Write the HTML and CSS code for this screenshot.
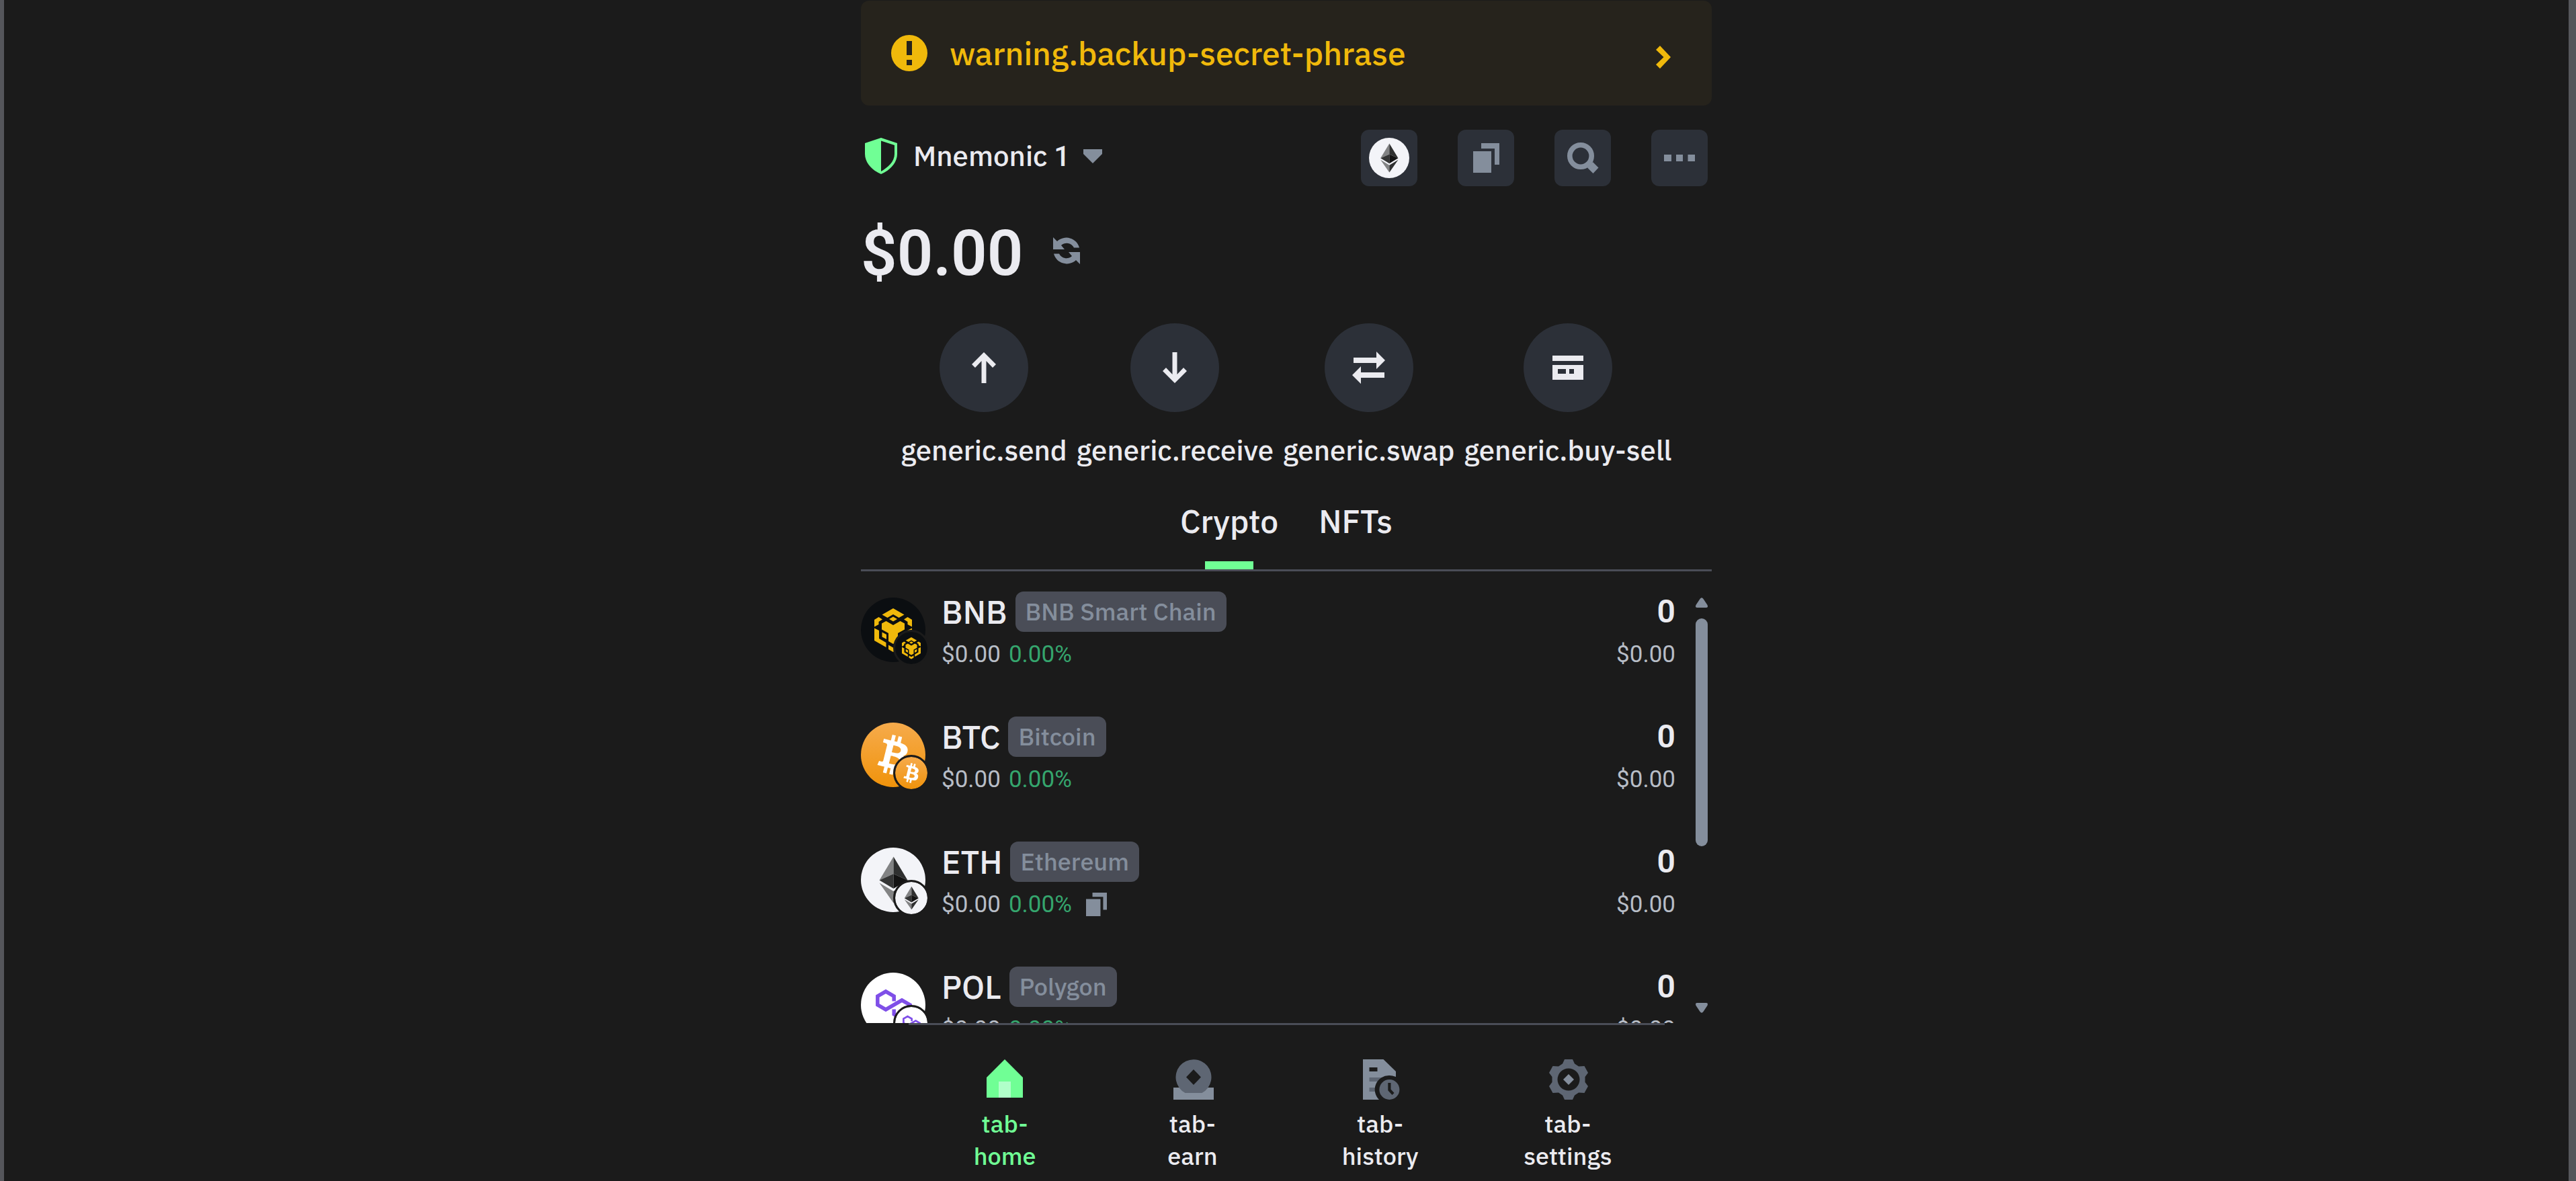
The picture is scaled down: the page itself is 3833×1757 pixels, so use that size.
FILE: index.html
```html
<!DOCTYPE html>
<html lang="en">
<head>
<meta charset="utf-8">
<meta name="viewport" content="width=device-width, initial-scale=1">
<title>Wallet</title>
<link rel="stylesheet" href="styles.css">
</head>
<body>
<svg class="sprite" aria-hidden="true">
  <defs>
    <linearGradient id="btc-fill" x1="0" y1="0" x2="0" y2="1">
      <stop offset="0" stop-color="#f6ab4c"/>
      <stop offset="1" stop-color="#f0930b"/>
    </linearGradient>
  </defs>
  <symbol id="bnb" viewBox="0 0 96 96">
    <circle cx="48" cy="48" r="48" fill="#0b0e11"/>
    <g fill="#f0b90b">
      <path d="M48 16L64.5 25.5L56.5 30L48 25L39.5 30L31.5 25.5Z"/>
      <path d="M48 28.5L54 32L48 35.5L42 32Z"/>
      <path d="M20 33L26.5 29L32 32.5L26.500 36V40L20 43.500Z"/>
      <path d="M76 33L69.5 29L64 32.5L69.500 36V40L76 43.500Z"/>
      <path d="M31 38.500L37.500 35L48 41L58.500 35L65 38.500V47.500L55 53V65L48 69L41 65V53L31 47.500Z"/>
      <path d="M20 45.500L27 49V61L37.500 67V74L20 64Z"/>
      <path d="M76 45.500L69 49V61L58.500 67V74L76 64Z"/>
      <path d="M31.500 51.500L38 55V62L31.500 58.500Z"/>
      <path d="M64.500 51.500L58 55V62L64.500 58.500Z"/>
      <path d="M41 70.500L48 74.500L55 70.500V77L48 81L41 77Z"/>
    </g>
  </symbol>
  <symbol id="btc" viewBox="0 0 32 32">
    <circle cx="16" cy="16" r="16" fill="url(#btc-fill)"/>
    <path fill="#fff" d="M23.189 14.02c.314-2.096-1.283-3.223-3.465-3.975l.708-2.84-1.728-.43-.69 2.765c-.454-.114-.92-.22-1.385-.326l.695-2.783L15.596 6l-.708 2.839c-.376-.086-.746-.17-1.104-.26l.002-.009-2.384-.595-.46 1.846s1.283.294 1.256.312c.7.175.826.638.805 1.006l-.806 3.235c.048.012.11.03.18.057l-.183-.045-1.13 4.532c-.086.212-.303.531-.793.41.018.025-1.256-.313-1.256-.313l-.858 1.978 2.25.561c.418.105.828.215 1.231.318l-.715 2.872 1.727.43.708-2.84c.472.127.93.245 1.378.357l-.706 2.828 1.728.43.715-2.866c2.948.558 5.164.333 6.097-2.333.752-2.146-.037-3.385-1.588-4.192 1.13-.26 1.98-1.003 2.207-2.538zm-3.95 5.538c-.533 2.147-4.148.986-5.32.695l.95-3.805c1.172.293 4.929.872 4.37 3.11zm.535-5.569c-.487 1.953-3.495.96-4.47.717l.86-3.45c.975.243 4.118.696 3.61 2.733z"/>
  </symbol>
  <symbol id="eth" viewBox="0 0 96 96">
    <circle cx="48" cy="48" r="48" fill="#f3f4f8"/>
    <path fill="#828384" d="M48.500 13.500L27.500 48.500L48.500 39ZM27.500 52.500L48.500 65V82.500Z"/>
    <path fill="#2f3030" d="M48.500 13.500L69.500 48.500L48.500 39ZM69.500 52.500L48.500 65V82.500Z"/>
    <path fill="#343535" d="M27.500 48.500L48.500 39V61Z"/>
    <path fill="#131313" d="M69.500 48.500L48.500 39V61Z"/>
  </symbol>
  <symbol id="pol" viewBox="0 0 96 96">
    <circle cx="48" cy="48" r="48" fill="#fff"/>
    <path fill="none" stroke="#7f4fe8" stroke-width="5.500" d="M49.200 42.500V35L37 28L24.800 35V48L37 55L61 41L73.200 48V62L61 69L49.200 62V54.500"/>
  </symbol>
  <symbol id="copy" viewBox="22 21 39 44">
    <path fill="#848e9c" d="M34 21H61V53H54V29H34ZM22 33H49V65H22Z"/>
  </symbol>
</svg>

<div class="app">
  <button class="banner" type="button">
    <svg class="icon" viewBox="0 0 72 72" aria-hidden="true"><path fill="#f0b90b" fill-rule="evenodd" d="M36 9a27 27 0 1 0 0 54a27 27 0 1 0 0-54ZM32 18H40V39H32ZM32 46H40V54H32Z"/></svg>
    <span class="banner-text">warning.backup-secret-phrase</span>
    <svg class="icon" viewBox="0 0 72 72" aria-hidden="true"><path fill="#f0b90b" d="M31 25L47 42L31 59L25 53L36.500 42L25 31Z"/></svg>
  </button>

  <header class="header">
    <button class="account" type="button">
      <svg class="shield" viewBox="0 0 48 54" aria-hidden="true"><path fill="#70ff95" fill-rule="evenodd" d="M24 0L48 8V24C48 38 36 49 24 54C12 49 0 38 0 24V8ZM24 4.500V50C34 44 44 36 44 24V11Z"/></svg>
      <span>Mnemonic <span class="num">1</span></span>
      <svg class="caret" viewBox="0 0 28 21" aria-hidden="true"><path fill="#848e9c" d="M0 0H28V7L14 21L0 7Z"/></svg>
    </button>
    <div class="tools">
      <button class="tool" type="button" aria-label="Network"><svg class="tool-coin"><use href="#eth"/></svg></button>
      <button class="tool" type="button" aria-label="Copy address"><svg class="tool-copy"><use href="#copy"/></svg></button>
      <button class="tool" type="button" aria-label="Search"><svg class="tool-glyph" viewBox="0 0 84 84"><circle cx="39" cy="39" r="16.200" fill="none" stroke="#848e9c" stroke-width="7.600"/><path fill="#848e9c" d="M57 48L65.500 56.500L57.500 65L49 56.500Z"/></svg></button>
      <button class="tool" type="button" aria-label="More"><svg class="tool-glyph" viewBox="0 0 84 84"><path fill="#848e9c" d="M19 37H30V47H19ZM37 37H47V47H37ZM54.500 37H65V47H54.500Z"/></svg></button>
    </div>
  </header>

  <section class="balance">
    <h1 class="total"><span class="num">$0.00</span></h1>
    <button class="refresh" type="button" aria-label="Refresh">
      <svg viewBox="0 0 40 40"><path id="arc" fill="#848e9c" d="M0 0L6 6A20 20 0 0 1 39 15.500H31A12 12 0 0 0 12 12L17 18H0Z"/><use href="#arc" transform="rotate(180 20 20)"/></svg>
    </button>
  </section>

  <section class="actions">
    <button class="action" type="button">
      <svg viewBox="0 0 132 132" aria-hidden="true"><path d="M66 43L84 61L79 66L69.500 56V89H62.500V56L53 66L48 61Z"/></svg>
      <span>generic.send</span>
    </button>
    <button class="action" type="button">
      <svg viewBox="0 0 132 132" aria-hidden="true"><path d="M66 89L84 71L79 66L69.500 76V43H62.500V76L53 66L48 71Z"/></svg>
      <span>generic.receive</span>
    </button>
    <button class="action" type="button">
      <svg viewBox="0 0 132 132" aria-hidden="true"><path d="M43 51H77V42L90 55L77 68V59H43ZM89 73H54V64L41 77L54 90V81H89Z"/></svg>
      <span>generic.swap</span>
    </button>
    <button class="action" type="button">
      <svg viewBox="0 0 132 132" aria-hidden="true"><path fill-rule="evenodd" d="M43 48H89V56H43ZM43 62H89V84H43ZM51 68V75H63V68ZM68 68V75H75V68Z"/></svg>
      <span>generic.buy-sell</span>
    </button>
  </section>

  <div class="tabs" role="tablist">
    <button class="tab active" type="button" role="tab" aria-selected="true">Crypto</button>
    <button class="tab" type="button" role="tab" aria-selected="false">NFTs</button>
  </div>

  <main class="assets">
    <ul class="asset-list">
      <li class="asset">
        <div class="coin"><svg class="coin-main"><use href="#bnb"/></svg><svg class="coin-chain"><use href="#bnb"/></svg></div>
        <div class="asset-info">
          <div class="line-top"><span>BNB</span><span class="chip">BNB Smart Chain</span></div>
          <div class="line-sub"><span class="num">$0.00</span><span class="num up">0.00%</span></div>
        </div>
        <div class="asset-amount">
          <div class="line-top amount"><span class="num">0</span></div>
          <div class="line-sub"><span class="num">$0.00</span></div>
        </div>
      </li>
      <li class="asset">
        <div class="coin"><svg class="coin-main"><use href="#btc"/></svg><svg class="coin-chain"><use href="#btc"/></svg></div>
        <div class="asset-info">
          <div class="line-top"><span>BTC</span><span class="chip">Bitcoin</span></div>
          <div class="line-sub"><span class="num">$0.00</span><span class="num up">0.00%</span></div>
        </div>
        <div class="asset-amount">
          <div class="line-top amount"><span class="num">0</span></div>
          <div class="line-sub"><span class="num">$0.00</span></div>
        </div>
      </li>
      <li class="asset">
        <div class="coin"><svg class="coin-main"><use href="#eth"/></svg><svg class="coin-chain"><use href="#eth"/></svg></div>
        <div class="asset-info">
          <div class="line-top"><span>ETH</span><span class="chip">Ethereum</span></div>
          <div class="line-sub"><span class="num">$0.00</span><span class="num up">0.00%</span><button class="copy" type="button" aria-label="Copy Ethereum address"><svg><use href="#copy"/></svg></button></div>
        </div>
        <div class="asset-amount">
          <div class="line-top amount"><span class="num">0</span></div>
          <div class="line-sub"><span class="num">$0.00</span></div>
        </div>
      </li>
      <li class="asset">
        <div class="coin"><svg class="coin-main"><use href="#pol"/></svg><svg class="coin-chain"><use href="#pol"/></svg></div>
        <div class="asset-info">
          <div class="line-top"><span>POL</span><span class="chip">Polygon</span></div>
          <div class="line-sub"><span class="num">$0.00</span><span class="num up">0.00%</span></div>
        </div>
        <div class="asset-amount">
          <div class="line-top amount"><span class="num">0</span></div>
          <div class="line-sub"><span class="num">$0.00</span></div>
        </div>
      </li>
    </ul>
    <div class="scrollbar" aria-hidden="true">
      <svg class="scroll-arrow" viewBox="0 0 18 15"><path d="M6.500 2Q9-1.500 11.500 2L17.500 11Q19 15 16 15H2Q-1 15 .5 11Z"/></svg>
      <div class="scroll-track"><div class="scroll-thumb"></div></div>
      <svg class="scroll-arrow" viewBox="0 0 18 15"><path d="M6.500 13Q9 16.500 11.500 13L17.500 4Q19 0 16 0H2Q-1 0 .5 4Z"/></svg>
    </div>
  </main>

  <nav class="nav">
    <a class="nav-item current" href="#home">
      <svg class="icon" viewBox="0 0 72 72" aria-hidden="true"><path fill="#70ff95" d="M36 6L63 33V63H9V33Z"/><path fill="#b0ffc9" d="M27 39H45V63H27Z"/></svg>
      <span>tab-<br>home</span>
    </a>
    <a class="nav-item" href="#earn">
      <svg class="icon" viewBox="0 0 72 72" aria-hidden="true"><path fill="#848e9c" d="M8 48H68V66H8Z"/><path fill="#5e6673" d="M25.500 56A26.500 26.500 0 1 1 50.500 56Z"/><path fill="#1b1b1b" d="M38 21L49 32.500L38 44L27 32.500Z"/></svg>
      <span>tab-<br>earn</span>
    </a>
    <a class="nav-item" href="#history">
      <svg class="icon" viewBox="0 0 72 72" aria-hidden="true"><path fill="#848e9c" fill-rule="evenodd" d="M10 6H40.500L59 24V66H10ZM19.500 18V24H31.500V18Z"/><path fill="#5e6673" d="M19.500 33H45V39H19.500ZM19.500 48H40V54H19.500Z"/><path fill="#1b1b1b" d="M49.400 30A21 21 0 0 0 34 66H62V32H59Q54 30 49.400 30Z"/><circle cx="49.400" cy="51" r="15" fill="#5e6673"/><path fill="none" stroke="#1b1b1b" stroke-width="4.200" d="M49.400 41V51.500L55 57.500"/></svg>
      <span>tab-<br>history</span>
    </a>
    <a class="nav-item" href="#settings">
      <svg class="icon" viewBox="0 0 72 72" aria-hidden="true"><path fill="#5e6673" fill-rule="evenodd" d="M31 6H43L46 12.500L52 16.500L60.500 16L66 26L61.500 32V40L66 46L60.500 56L52 55.500L46 59.500L43 66H31L28 59.500L22 55.500L13.500 56L8 46L12.500 40V32L8 26L13.500 16L22 16.500L28 12.500ZM37 19.500a16.500 16.500 0 1 0 0 33a16.500 16.500 0 1 0 0-33Z"/><path fill="#848e9c" d="M37 28L45 36L37 44L29 36Z"/></svg>
      <span>tab-<br>settings</span>
    </a>
  </nav>
</div>
</body>
</html>
```
FILE: styles.css
```css
* {
  box-sizing: border-box;
}

body {
  margin: 0;
  border: solid #55565b;
  border-width: 0 11px 0 6px;
  background: #1b1b1b;
  color: #ebebf0;
  font: 500 42px/66px "IBM Plex Sans", "Open Sans", sans-serif;
}

button {
  margin: 0;
  padding: 0;
  border: 0;
  background: none;
  color: inherit;
  font: inherit;
  cursor: pointer;
}

svg {
  display: block;
  flex: none;
}

.sprite {
  position: absolute;
  width: 0;
  height: 0;
}

.icon {
  width: 72px;
  height: 72px;
}

/* Figures use a narrower face than the labels around them */
.num {
  font-family: Roboto, sans-serif;
  line-height: 1;
}

.app {
  display: flex;
  flex-direction: column;
  width: 100%;
  max-width: 1266px;
  height: 100vh;
  margin: 0 auto;
  padding-top: 1px;
}

.banner {
  display: flex;
  align-items: center;
  gap: 24px;
  padding: 42px 36px;
  border-radius: 12px;
  background: #26231c;
  color: #f0b90b;
  font-size: 48px;
  line-height: 72px;
  text-align: left;
}

.banner-text {
  flex: 1;
}

.header {
  display: flex;
  justify-content: space-between;
  margin-top: 36px;
  padding: 0 6px;
}

.account {
  display: flex;
  align-items: center;
  gap: 20px;
  height: 78px;
}

.shield {
  width: 48px;
  height: 54px;
  margin-right: 4px;
}

.caret {
  width: 28px;
  height: 21px;
}

.tools {
  display: flex;
  gap: 60px;
}

.tool {
  display: grid;
  place-items: center;
  width: 84px;
  height: 84px;
  border-radius: 12px;
  background: #2c3038;
}

.tool-glyph {
  width: 84px;
  height: 84px;
}

.tool-coin {
  width: 60px;
  height: 60px;
}

.tool-copy {
  width: 39px;
  height: 44px;
}

.balance {
  display: flex;
  align-items: center;
  gap: 44px;
  margin-top: 36px;
}

.total {
  margin: 0;
  font-size: 96px;
  font-weight: 600;
  line-height: 120px;
}

.total .num {
  font-size: 94px;
}

.refresh svg {
  width: 40px;
  height: 40px;
}

.actions {
  display: flex;
  justify-content: center;
  gap: 14px;
  margin-top: 48px;
}

.action {
  display: flex;
  flex-direction: column;
  align-items: center;
  gap: 24px;
}

.action svg {
  width: 132px;
  height: 132px;
  border-radius: 50%;
  background: #2c3038;
  fill: #ebebf0;
}

.tabs {
  display: flex;
  justify-content: center;
  gap: 60px;
  margin-top: 36px;
  border-bottom: 3px solid #4a4d57;
}

.tab {
  display: flex;
  flex-direction: column;
  align-items: center;
  gap: 24px;
  font-size: 48px;
  line-height: 72px;
}

.tab::after {
  content: "";
  width: 72px;
  height: 12px;
}

.tab.active::after {
  background: #70ff95;
}

.assets {
  display: flex;
  flex: 1;
  gap: 30px;
  min-height: 0;
  padding-right: 6px;
  overflow: hidden;
}

.asset-list {
  flex: 1;
  margin: 0;
  padding: 0;
  list-style: none;
}

.asset {
  display: flex;
  align-items: flex-start;
  gap: 24px;
  height: 186px;
  padding-top: 27px;
}

.coin {
  position: relative;
  margin-top: 12px;
}

.coin-main {
  width: 96px;
  height: 96px;
}

.coin-chain {
  position: absolute;
  right: -6px;
  bottom: -6px;
  width: 54px;
  height: 54px;
  border: 3px solid #1b1b1b;
  border-radius: 50%;
  background: #1b1b1b;
}

.asset-info {
  flex: 1;
}

.line-top {
  display: flex;
  align-items: center;
  gap: 12px;
  height: 66px;
  font-size: 48px;
}

.line-sub {
  display: flex;
  align-items: center;
  gap: 12px;
  height: 54px;
  margin-top: 3px;
  color: #b7bdc6;
  font-size: 35px;
  font-weight: 400;
}

.amount {
  font-weight: 600;
}

.asset-amount > div {
  justify-content: flex-end;
}

.up {
  color: #35a56d;
}

.chip {
  padding: 0 15px;
  border-radius: 12px;
  background: #4a4d57;
  color: #848e9c;
  font-size: 36px;
  line-height: 60px;
}

.copy {
  padding-left: 9px;
}

.copy svg {
  width: 31px;
  height: 35px;
}

.scrollbar {
  display: flex;
  flex-direction: column;
  gap: 16px;
  width: 18px;
  padding: 39px 0 15px;
}

.scroll-arrow {
  width: 18px;
  height: 15px;
  fill: #848e9c;
}

.scroll-track {
  flex: 1;
}

.scroll-thumb {
  height: 61%;
  border-radius: 9px;
  background: #848e9c;
}

.nav {
  display: grid;
  grid-template-columns: repeat(4, 1fr);
  width: 1125px;
  max-width: 100%;
  margin: 0 auto;
  padding: 45px 4px 13px;
  border-top: 3px solid #4a4d57;
}

.nav-item {
  display: flex;
  flex-direction: column;
  align-items: center;
  gap: 6px;
  color: inherit;
  font-size: 36px;
  line-height: 48px;
  text-align: center;
  text-decoration: none;
}

.nav-item.current {
  color: #70ff95;
}
```
